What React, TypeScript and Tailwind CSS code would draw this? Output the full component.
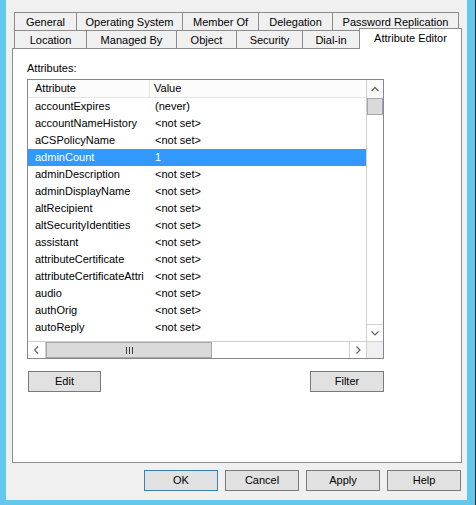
import React from 'react'

const row1 = [
  { label: 'General', w: 'w-[62px]' },
  { label: 'Operating System', w: 'w-[106px]' },
  { label: 'Member Of', w: 'w-[76px]' },
  { label: 'Delegation', w: 'w-[74px]' },
  { label: 'Password Replication', w: 'w-[127px] border-r' },
]

const row2 = [
  { label: 'Location', w: 'w-[72px]' },
  { label: 'Managed By', w: 'w-[90px]' },
  { label: 'Object', w: 'w-[60px]' },
  { label: 'Security', w: 'w-[66px]' },
  { label: 'Dial-in', w: 'w-[57px]' },
]

const attrs: [string, string][] = [
  ['accountExpires', '(never)'],
  ['accountNameHistory', '<not set>'],
  ['aCSPolicyName', '<not set>'],
  ['adminCount', '1'],
  ['adminDescription', '<not set>'],
  ['adminDisplayName', '<not set>'],
  ['altRecipient', '<not set>'],
  ['altSecurityIdentities', '<not set>'],
  ['assistant', '<not set>'],
  ['attributeCertificate', '<not set>'],
  ['attributeCertificateAttri', '<not set>'],
  ['audio', '<not set>'],
  ['authOrig', '<not set>'],
  ['autoReply', '<not set>'],
]

function Chevron({ dir }: { dir: 'up' | 'down' | 'left' | 'right' }) {
  const pts = {
    up: '0.5,4 4,0.5 7.5,4',
    down: '0.5,0.5 4,4 7.5,0.5',
    left: '4,0.5 0.5,4 4,7.5',
    right: '0.5,0.5 4,4 0.5,7.5',
  }[dir]
  const vert = dir === 'up' || dir === 'down'
  return (
    <svg width={vert ? 8 : 5} height={vert ? 5 : 8} viewBox={vert ? '0 0 8 5' : '0 0 5 8'}>
      <polyline points={pts} fill="none" stroke="#606060" strokeWidth="1.2" />
    </svg>
  )
}

function Btn({ label, cls = '' }: { label: string; cls?: string }) {
  return (
    <div className={`h-[21px] flex items-center justify-center bg-[#e1e1e1] border ${cls || 'border-[#7a7a7a]'} text-[11px] text-black`}>
      {label}
    </div>
  )
}

export default function App() {
  return (
    <div
      className="w-[476px] h-[505px] bg-[#63c8ea] pl-[6px] pr-[8px] pb-[5px] border-r border-[#2d2d2d] flex"
      style={{ fontFamily: '"Liberation Sans", Arial, sans-serif' }}
    >
      <div className="w-[461px] h-[500px] bg-[#f0f0f0] pt-[12px] pl-[6px] pr-[5px] flex flex-col">
        {/* tabs */}
        <div className="ml-[2px] flex h-[18px]">
          {row1.map((t) => (
            <div
              key={t.label}
              className={`${t.w} h-[18px] pt-[2px] border-l border-t border-[#8c8c8c] bg-[#f0f0f0] flex items-center justify-center text-[11px] text-black leading-none`}
            >
              {t.label}
            </div>
          ))}
        </div>
        <div className="ml-[2px] flex items-end h-[18px]">
          {row2.map((t) => (
            <div
              key={t.label}
              className={`${t.w} h-[18px] pt-[2px] border-l border-t border-[#8c8c8c] bg-[#f0f0f0] flex items-center justify-center text-[11px] text-black leading-none`}
            >
              {t.label}
            </div>
          ))}
          <div className="relative z-10 w-[103px] h-[21px] -mb-px border-l border-t border-r border-[#8c8c8c] bg-white flex justify-center pt-[3px] text-[11px] text-black leading-[13px]">
            Attribute Editor
          </div>
        </div>

        {/* panel */}
        <div className="w-[450px] h-[415px] border border-[#8c8c8c] bg-white pt-[13px] pl-[14px] flex flex-col">
          <div className="h-[13px] leading-[13px] text-[11px] text-black mb-[4px]">Attributes:</div>

          <div className="w-[357px] h-[280px] border border-[#828790] bg-white flex flex-col">
            <div className="flex h-[261px]">
              <div className="w-[338px] overflow-hidden text-[11px] text-black">
                <div className="flex h-[18px] bg-[#fcfcfc] border-b border-[#e5e5e5]">
                  <div className="w-[122px] pl-[7px] flex items-center border-r border-[#e5e5e5]">Attribute</div>
                  <div className="flex-1 pl-[4px] flex items-center">Value</div>
                </div>
                {attrs.map(([a, v]) => {
                  const sel = a === 'adminCount'
                  return (
                    <div
                      key={a}
                      className={`flex h-[17px] items-center ${sel ? 'bg-[#3399ff] text-white' : ''}`}
                    >
                      <div className="w-[122px] pl-[7px] whitespace-nowrap overflow-hidden">{a}</div>
                      <div className="flex-1 pl-[5px] whitespace-nowrap">{v}</div>
                    </div>
                  )
                })}
              </div>
              <div className="w-[17px] flex flex-col border-l border-[#d0d0d0] bg-white">
                <div className="h-[18px] flex items-center justify-center bg-[#fafafa]">
                  <Chevron dir="up" />
                </div>
                <div className="h-[17px] bg-[#dadada] border border-[#a6a6a6]" />
                <div className="flex-1" />
                <div className="h-[17px] flex items-center justify-center border-t border-[#d0d0d0]">
                  <Chevron dir="down" />
                </div>
              </div>
            </div>
            <div className="flex h-[17px] border-t border-[#d0d0d0]">
              <div className="w-[338px] flex">
                <div className="w-[18px] flex items-center justify-center border-r border-[#d0d0d0]">
                  <Chevron dir="left" />
                </div>
                <div className="w-[166px] bg-[#dadada] border border-[#a6a6a6] flex items-center justify-center">
                  <svg width="7" height="7" viewBox="0 0 7 7">
                    <path d="M0.5 0v7M3.5 0v7M6.5 0v7" stroke="#404040" strokeWidth="1" />
                  </svg>
                </div>
                <div className="flex-1 bg-white" />
                <div className="w-[17px] flex items-center justify-center border-l border-[#d0d0d0]">
                  <Chevron dir="right" />
                </div>
              </div>
              <div className="flex-1 bg-[#f0f0f0] border-l border-[#d0d0d0]" />
            </div>
          </div>

          <div className="w-[357px] mt-[12px] pl-[1px] flex justify-between">
            <div className="w-[73px]"><Btn label="Edit" /></div>
            <div className="w-[74px]"><Btn label="Filter" /></div>
          </div>
        </div>

        {/* dialog buttons */}
        <div className="mt-[7px] flex justify-end gap-[7px] pr-[1px]">
          <div className="w-[74px]"><Btn label="OK" cls="border-[#3c7fb1]" /></div>
          <div className="w-[74px]"><Btn label="Cancel" /></div>
          <div className="w-[74px]"><Btn label="Apply" /></div>
          <div className="w-[74px]"><Btn label="Help" /></div>
        </div>
      </div>
    </div>
  )
}
